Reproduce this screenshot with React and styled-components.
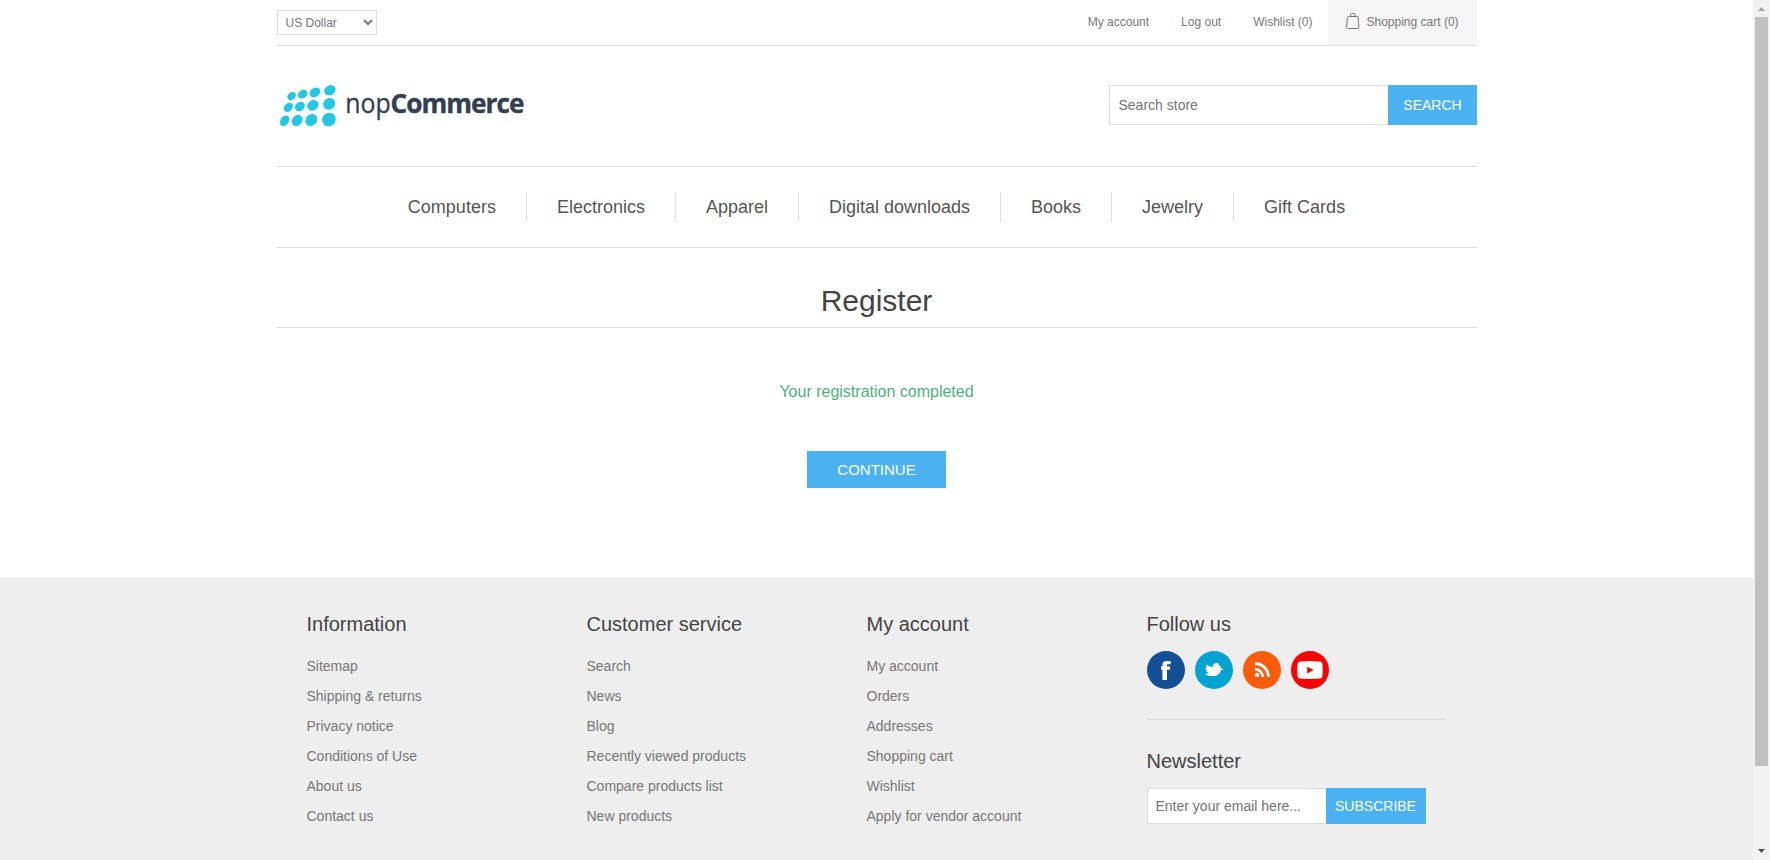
import React from 'react';
import styled, { createGlobalStyle } from 'styled-components';

const line = '#ddd';
const blue = '#4ab2f1';

const GlobalStyle = createGlobalStyle`
  * { box-sizing: border-box; margin: 0; padding: 0; }
  html, body { height: 860px; overflow: hidden; background: #fff; }
  body { font: 14px 'Liberation Sans', Arial, sans-serif; color: #777; }
  ul { list-style: none; }
  a { color: inherit; text-decoration: none; }
  input, select, button { font-family: inherit; border-radius: 0; outline: none; }
  h1, h2 { font-weight: normal; color: #444; }
`;

const Screen = styled.div`
  display: flex;
  height: 860px;
`;
const Page = styled.div`
  flex: 1;
  height: 860px;
  overflow: hidden;
`;
const Container = styled.div`
  width: 1200px;
  margin: 0 auto;
`;

const TopBar = styled.div`
  display: flex;
  justify-content: space-between;
  align-items: flex-start;
  height: 46px;
  border-bottom: 1px solid ${line};
  font-size: 12px;
`;
const CurrencySelect = styled.select`
  width: 100px;
  height: 25px;
  margin-top: 10px;
  padding: 0 4px;
  border: 1px solid ${line};
  background: #fff;
  color: #777;
  font-size: 12px;
`;
const TopLinks = styled.nav`
  display: flex;
  gap: 32px;
  line-height: 44px;
`;
const CartLink = styled.a`
  display: flex;
  align-items: flex-start;
  gap: 7px;
  height: 45px;
  width: 149px;
  margin-left: -17px;
  padding-left: 18px;
  background: #f6f6f6;
  svg { margin-top: 12px; }
`;

const Header = styled.header`
  display: flex;
  justify-content: space-between;
  align-items: flex-start;
  height: 121px;
  padding-top: 29px;
  border-bottom: 1px solid ${line};
`;
const Form = styled.form`
  display: flex;
  margin-top: 10px;
`;
const NewsletterForm = styled(Form)`
  margin-top: 15px;
`;
const Field = styled.input`
  width: ${(p) => p.$width}px;
  height: ${(p) => p.$height}px;
  padding: 0 8px 0 ${(p) => p.$indent || 8}px;
  border: 1px solid ${line};
  border-right: 0;
  background: #fff;
  font-size: 14px;
  color: #777;
  &::placeholder { color: #757575; opacity: 1; }
`;
const Button = styled.button`
  width: ${(p) => p.$width}px;
  height: ${(p) => p.$height}px;
  padding-left: ${(p) => p.$indent || 0}px;
  border: 0;
  background: ${blue};
  color: #fff;
  font-size: ${(p) => p.$size || 14}px;
  text-align: center;
`;

const Menu = styled.ul`
  display: flex;
  justify-content: center;
  align-items: center;
  height: 81px;
  border-bottom: 1px solid ${line};
`;
const MenuItem = styled.li`
  height: 30px;
  padding: 0 30px;
  line-height: 30px;
  font-size: 18px;
  color: #555;
  & + & { border-left: 1px solid ${line}; }
`;

const Main = styled.main`
  display: flex;
  flex-direction: column;
  align-items: center;
  height: 330px;
`;
const Title = styled.h1`
  width: 100%;
  height: 80px;
  padding-top: 32px;
  border-bottom: 1px solid ${line};
  text-align: center;
  font-size: 30px;
  line-height: 41px;
`;
const Result = styled.p`
  margin: 54px 0 50px;
  font-size: 16px;
  line-height: 19px;
  color: #4cb17c;
`;

const Footer = styled.footer`
  height: 282px;
  background: #eee;
`;
const FooterColumns = styled.div`
  display: grid;
  grid-template-columns: repeat(3, 280px) 300px;
  width: 1200px;
  margin: 0 auto;
  padding: 35px 30px 0;
`;
const FooterTitle = styled.h2`
  height: 23px;
  font-size: 20px;
  line-height: 23px;
`;
const FooterList = styled.ul`
  margin-top: 15px;
  line-height: 30px;
`;
const Social = styled.div`
  display: flex;
  gap: 10px;
  height: 69px;
  margin: 15px 0 30px;
  border-bottom: 1px solid ${line};
`;

const ScrollTrack = styled.div`
  display: flex;
  flex-direction: column;
  align-items: center;
  width: 17px;
  height: 860px;
  background: #f1f1f1;
`;
const ScrollArrow = styled.svg`
  display: block;
  width: 17px;
  height: 17px;
`;
const ScrollThumb = styled.div`
  width: 13px;
  height: 749px;
  margin-bottom: 77px;
  background: #c1c1c1;
`;

// Logo dots: centre x, centre y, long radius, short radius, tilt
const dots = [
  [14.6, 96, 4.6, 3.5, -40], [25.6, 94.3, 5.2, 4, -35], [37.9, 92.4, 5.7, 4.4, -32], [52.9, 90.2, 6, 4.8, -28],
  [11.3, 107.4, 5.2, 3.9, -45], [22.9, 106.5, 5.4, 4.4, -42], [35.9, 105.4, 6, 5, -38], [52.2, 103.8, 6.3, 5.6, -35],
  [7.7, 120.7, 5.8, 4.1, -55], [20.3, 120.5, 6, 4.9, -52], [34.3, 120, 6.5, 5.6, -48], [51.9, 119.5, 7, 6.6, -45],
];

function Logo() {
  return (
    <svg width="254" height="60" viewBox="0 75 254 60" role="img" aria-label="nopCommerce">
      {dots.map(([x, y, rx, ry, tilt]) => (
        <ellipse key={`${x}-${y}`} cx={x} cy={y} rx={rx} ry={ry} fill="#22c8e2" transform={`rotate(${tilt} ${x} ${y})`} />
      ))}
      <g fontFamily="'Open Sans', 'Noto Sans', sans-serif" fontSize="26.5" fill="#34404f" stroke="#34404f">
        <text x="68.3" y="112.8" textLength="45.5" lengthAdjust="spacingAndGlyphs" strokeWidth="0.3">nop</text>
        <text x="113.5" y="112.8" fontWeight="700" letterSpacing="-1" textLength="133" lengthAdjust="spacingAndGlyphs" strokeWidth="0.4">Commerce</text>
      </g>
    </svg>
  );
}

function BagIcon() {
  return (
    <svg width="14" height="18" viewBox="0 0 14 18" fill="none" stroke="#777" strokeWidth="1">
      <path d="M2.500 4.500h8.500c.6 0 .9.300 1 .8l.9 9.700c.1 1-.4 1.500-1.200 1.500H1.800c-.8 0-1.300-.5-1.200-1.500l.9-9.700c.1-.5.400-.8 1-.8z" />
      <path d="M4.600 4.500V2.500c0-.6.3-1 1-1h2.300c.7 0 1 .4 1 1v2" />
    </svg>
  );
}

const Facebook = () => (
  <svg width="38" height="38" viewBox="0 0 38 38">
    <circle cx="19" cy="19" r="19" fill="#124f94" />
    <path fill="#fff" d="M15.400 29V18.700H14v-3.200h1.400v-1.300c0-2.900 1.500-4.200 4.400-4.200 1.500 0 2.900.1 4.200.4l-.5 2.900h-2.200c-1 0-1.400.400-1.400 1.300v.9h3.300l-.4 3.200H20V29z" />
  </svg>
);
const Twitter = () => (
  <svg width="38" height="38" viewBox="0 0 38 38">
    <circle cx="19" cy="19" r="19" fill="#00a3d1" />
    <path fill="#fff" d="M9.800 23.300c1.800 0 3.200-.4 4.200-1.200-1.500-.3-2.400-1-2.800-2.100l1.700-.2c-1.400-.6-2.300-1.600-2.600-2.900l1.900.1c-1.300-1-1.500-2.400-.7-3.600 2 1.600 3.800 2.300 6.100 2.600.5-2.500 1.900-4.100 3.900-4.100 1.600.1 2.500 1.100 2.900 2.800l1.700.9-.8.900 3.200 1.900-2.600.9c-.8 3.500-3.500 5.800-8.100 5.800-3.100 0-5.800-.4-8-1.800z" />
  </svg>
);
const Rss = () => (
  <svg width="38" height="38" viewBox="0 0 38 38">
    <circle cx="19" cy="19" r="19" fill="#ff5c0a" />
    <circle cx="14.200" cy="23.900" r="2.200" fill="#fff" />
    <path fill="none" stroke="#fff" strokeWidth="2.800" d="M12 18.200a7.800 7.800 0 0 1 7.800 7.800M12 12.500A13.500 13.500 0 0 1 25.500 26" />
  </svg>
);
const YouTube = () => (
  <svg width="38" height="38" viewBox="0 0 38 38">
    <circle cx="19" cy="19" r="19" fill="#fe0000" />
    <path fill="#fff" d="M9.500 10.400q9.500-.8 19 0c2 .1 2.900 1.200 3 3.300q.5 5.300 0 10.600c-.1 2.100-1 3.200-3 3.300q-9.500.8-19 0c-2-.1-2.900-1.200-3-3.300q-.5-5.300 0-10.600c.1-2.100 1-3.200 3-3.300z" />
    <path fill="#fe0000" d="M16.200 15.700v6.800l6.500-3.400z" />
  </svg>
);

const menu = ['Computers', 'Electronics', 'Apparel', 'Digital downloads', 'Books', 'Jewelry', 'Gift Cards'];
const columns = [
  ['Information', ['Sitemap', 'Shipping & returns', 'Privacy notice', 'Conditions of Use', 'About us', 'Contact us']],
  ['Customer service', ['Search', 'News', 'Blog', 'Recently viewed products', 'Compare products list', 'New products']],
  ['My account', ['My account', 'Orders', 'Addresses', 'Shopping cart', 'Wishlist', 'Apply for vendor account']],
];

export default function App() {
  return (
    <Screen>
      <GlobalStyle />
      <Page>
        <Container>
          <TopBar>
            <CurrencySelect defaultValue="usd" aria-label="Currency">
              <option value="usd">US Dollar</option>
              <option value="eur">Euro</option>
            </CurrencySelect>
            <TopLinks>
              <a href="#account">My account</a>
              <a href="#logout">Log out</a>
              <a href="#wishlist">Wishlist (0)</a>
              <CartLink href="#cart"><BagIcon />Shopping cart (0)</CartLink>
            </TopLinks>
          </TopBar>
          <Header>
            <Logo />
            <Form>
              <Field $width={279} $height={40} $indent={9} placeholder="Search store" />
              <Button type="button" $width={89} $height={40} $indent={1}>SEARCH</Button>
            </Form>
          </Header>
          <Menu>
            {menu.map((m) => <MenuItem key={m}><a href="#menu">{m}</a></MenuItem>)}
          </Menu>
          <Main>
            <Title>Register</Title>
            <Result>Your registration completed</Result>
            <Button type="button" $width={139} $height={37} $size={15}>CONTINUE</Button>
          </Main>
        </Container>
        <Footer>
          <FooterColumns>
            {columns.map(([title, links]) => (
              <div key={title}>
                <FooterTitle>{title}</FooterTitle>
                <FooterList>
                  {links.map((l) => <li key={l}><a href="#page">{l}</a></li>)}
                </FooterList>
              </div>
            ))}
            <div>
              <FooterTitle>Follow us</FooterTitle>
              <Social><Facebook /><Twitter /><Rss /><YouTube /></Social>
              <FooterTitle>Newsletter</FooterTitle>
              <NewsletterForm>
                <Field $width={179} $height={36} placeholder="Enter your email here..." />
                <Button type="button" $width={100} $height={36}>SUBSCRIBE</Button>
              </NewsletterForm>
            </div>
          </FooterColumns>
        </Footer>
      </Page>
      <ScrollTrack>
        <ScrollArrow viewBox="0 0 17 17"><path fill="#a3a3a3" d="M5 11h7L8.500 7z" /></ScrollArrow>
        <ScrollThumb />
        <ScrollArrow viewBox="0 0 17 17"><path fill="#505050" d="M5 6h7l-3.500 4z" /></ScrollArrow>
      </ScrollTrack>
    </Screen>
  );
}
